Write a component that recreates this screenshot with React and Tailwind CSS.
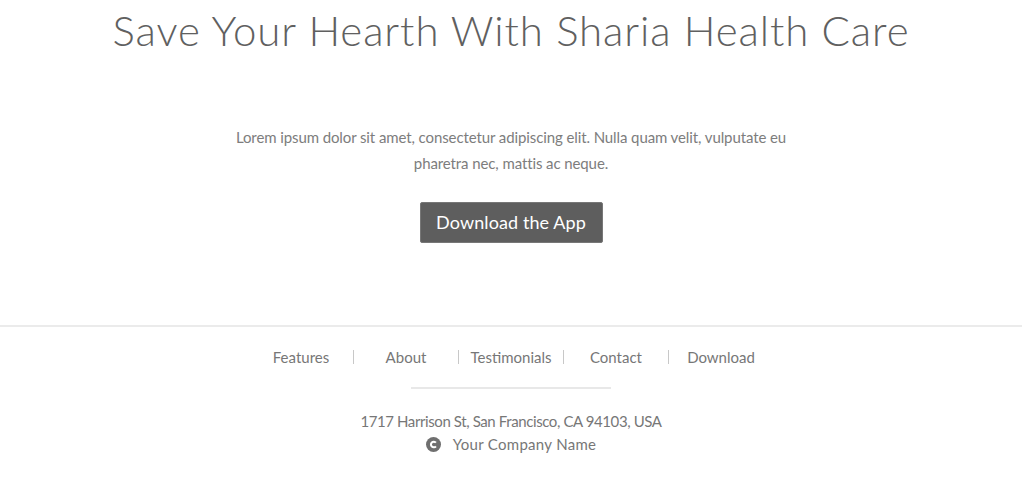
const links = ['Features', 'About', 'Testimonials', 'Contact', 'Download'];

const CopyrightIcon = () => (
  <svg viewBox="0 0 16 16" className="h-[15px] w-[15px]" aria-hidden="true">
    <circle cx="8" cy="8" r="8" fill="#6f6f6f" />
    <path
      d="M10.6 6.1A3 3 0 1 0 10.6 9.9"
      fill="none"
      stroke="#fff"
      strokeWidth="2.2"
      strokeLinecap="butt"
    />
  </svg>
);

const App = () => {
  return (
    <div className="min-h-screen bg-white w-[1022px] flex flex-col font-['Lato',sans-serif]">
      {/* Hero */}
      <section className="flex flex-col items-center text-center pt-[5px] h-[325px]">
        <h1 className="text-[42px] font-light text-[#606060] tracking-[0.9px] leading-[50px]">
          Save Your Hearth With Sharia Health Care
        </h1>
        <p className="mt-[69px] w-[570px] text-[15px] leading-[26px] text-[#7d7d7d] tracking-[-0.1px]">
          Lorem ipsum dolor sit amet, consectetur adipiscing elit. Nulla quam velit, vulputate eu pharetra nec, mattis ac neque.
        </p>
        <button className="mt-[26px] h-[41px] w-[183px] bg-[#5e5e5e] text-white text-[18px] tracking-[0.1px] rounded-[2px] border border-[#777]">
          Download the App
        </button>
      </section>

      {/* Footer */}
      <footer className="border-t-2 border-[#ebebeb] flex flex-col items-center pt-[19px]">
        <nav className="flex items-center text-[15px] text-[#777]">
          {links.map((l, i) => (
            <div key={l} className="flex items-center">
              {i > 0 && <span className="w-px h-[14px] bg-[#c8c8c8]" />}
              <span className="w-[104px] text-center leading-[22px]">{l}</span>
            </div>
          ))}
        </nav>
        <div className="mt-[19px] w-[200px] h-[2px] bg-[#e8e8e8]" />
        <p className="mt-[21px] text-[15px] leading-[22px] text-[#777] tracking-[-0.4px]">
          1717 Harrison St, San Francisco, CA 94103, USA
        </p>
        <p className="mt-[1px] flex items-center gap-[12px] text-[15px] leading-[22px] text-[#777]">
          <CopyrightIcon />
          <span className="tracking-[0.3px]">Your Company Name</span>
        </p>
      </footer>
    </div>
  );
};

export default App;
